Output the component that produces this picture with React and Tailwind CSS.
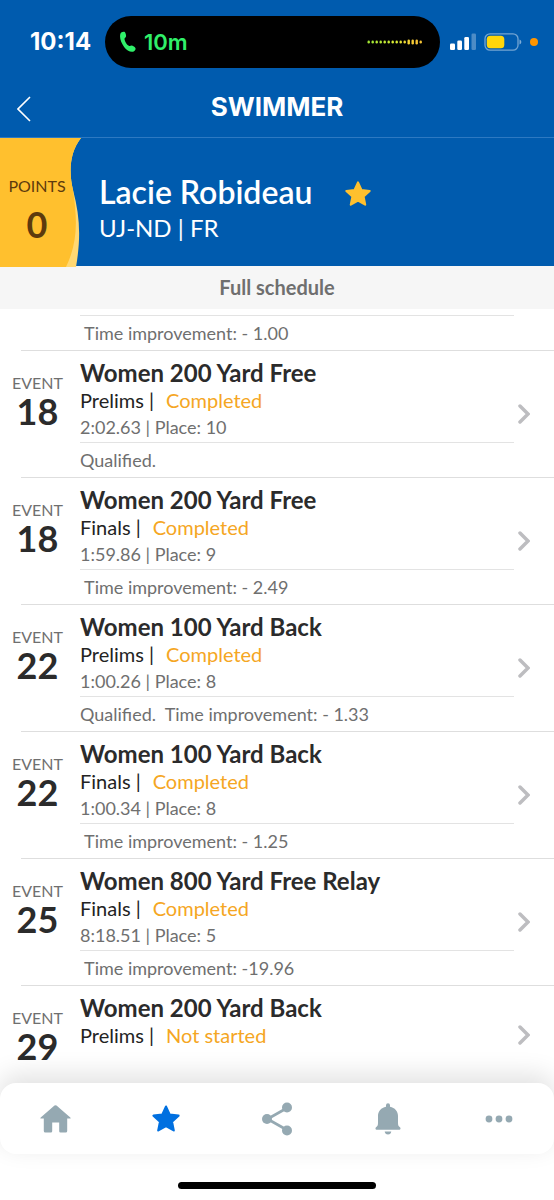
const events = [
  { number: 18, title: 'Women 200 Yard Free', round: 'Prelims', status: 'Completed', result: '2:02.63 | Place: 10', note: 'Qualified.' },
  { number: 18, title: 'Women 200 Yard Free', round: 'Finals', status: 'Completed', result: '1:59.86 | Place: 9', note: ' Time improvement: - 2.49' },
  { number: 22, title: 'Women 100 Yard Back', round: 'Prelims', status: 'Completed', result: '1:00.26 | Place: 8', note: 'Qualified.  Time improvement: - 1.33' },
  { number: 22, title: 'Women 100 Yard Back', round: 'Finals', status: 'Completed', result: '1:00.34 | Place: 8', note: ' Time improvement: - 1.25' },
  { number: 25, title: 'Women 800 Yard Free Relay', round: 'Finals', status: 'Completed', result: '8:18.51 | Place: 5', note: ' Time improvement: -19.96' },
  { number: 29, title: 'Women 200 Yard Back', round: 'Prelims', status: 'Not started' },
]

const wave = [
  '#a3e635', '#a3e635', '#b4e835', '#b4e835', '#c6ea35', '#c6ea35', '#d9ec35',
  '#d9ec35', '#e8e435', '#f0dc35', '#f5d435', '#f7cc35', '#f7c435', '#f7c435',
]

function Star({ className }) {
  return (
    <svg viewBox="0 0 24 24" fill="currentColor" stroke="currentColor" strokeWidth="1.8" strokeLinejoin="round" className={className}>
      <path d="M12 2.1l2.94 6.45 7.06.81-5.24 4.79 1.41 6.95L12 17.6l-6.17 3.5 1.41-6.95L2 9.36l7.06-.81z" />
    </svg>
  )
}

function StatusBar() {
  return (
    <div className="flex items-center pt-4 pr-4 pl-[30px] text-white">
      <span className="w-[75px] text-2xl leading-[52px] font-bold">10:14</span>
      <div className="flex h-[52px] flex-1 items-center justify-between rounded-full bg-black pl-[15px] pr-[17px]">
        <div className="flex items-center gap-2 text-[#30f06a]">
          <svg viewBox="0 0 16 22" fill="currentColor" className="h-[22px] w-4">
            <path d="M1.2 1.6C2.3.7 4 .3 4.8 1.1c.8.9 1.5 3.3 1.2 4.4-.3 1.2-1.6 1.5-1.5 2.7.3 2.3 2.2 5.4 4.3 6.6 1.2.7 2-.4 3.2-.2 1.2.3 3 1.6 3.5 2.7.4 1.2-.9 2.9-2.4 3.4-2.6.8-6.600-1.300-9-4.800C1.500 12.100-.3 8.100.1 4.500c.1-1.200.4-2.300 1.100-2.900z" />
          </svg>
          <span className="text-[22px] font-semibold">10m</span>
        </div>
        <svg viewBox="0 0 56 6" className="h-[6px] w-14">
          {wave.map((color, i) => (
            <rect key={i} x={i * 4 + 0.5} y={i > 9 && i < 13 ? 0.5 : 1.5} width="2.4" height={i > 9 && i < 13 ? 5 : 3} rx="1.2" fill={color} />
          ))}
        </svg>
      </div>
      <svg viewBox="0 0 26 18" fill="currentColor" className="ml-[10px] h-[18px] w-[26px]">
        <rect x="0" y="10.5" width="5" height="6.5" rx="1.3" />
        <rect x="7.3" y="7.5" width="4.7" height="9.5" rx="1.3" />
        <rect x="14.3" y="4" width="4.7" height="13" rx="1.3" />
        <rect x="21.5" y="0.5" width="4.5" height="16.5" rx="1.3" opacity="0.3" />
      </svg>
      <svg viewBox="0 0 38 18" className="ml-2 h-[18px] w-[38px]">
        <rect x="1" y="0.8" width="33" height="16.4" rx="5" fill="none" stroke="#fff" strokeOpacity="0.45" strokeWidth="1.3" />
        <rect x="2.8" y="2.8" width="17.5" height="12.4" rx="3.5" fill="#ffd60a" />
        <path d="M35.5 6.5c2.4 1 2.4 4 0 5z" fill="#fff" opacity="0.5" />
      </svg>
      <span className="ml-2 size-2 rounded-full bg-[#ff9500]" />
    </div>
  )
}

function Header() {
  return (
    <header className="bg-[#005bae] font-['Inter',sans-serif]">
      <StatusBar />
      <div className="grid h-[70px] grid-cols-[1fr_auto_1fr] items-center border-b border-[#2d79c2] pt-2">
        <button type="button" aria-label="Back" className="justify-self-start pt-1 pl-[17px] text-white">
          <svg viewBox="0 0 14 26" fill="none" stroke="currentColor" strokeWidth="1.6" className="h-[26px] w-[14px]">
            <path d="M13 1 1 13l12 12" />
          </svg>
        </button>
        <h1 className="text-[26px] leading-8 font-bold text-white">SWIMMER</h1>
      </div>
    </header>
  )
}

function Profile() {
  return (
    <section className="relative flex h-[128px] bg-[#005bae]">
      <svg viewBox="0 0 82 129" className="absolute top-0 left-0 h-[129px] w-[82px]">
        <path d="M0 0H81C69 15 69 35 73 52C80 78 81 100 76 129H0z" fill="#ffd873" />
        <path d="M0 0H81C69 15 69 35 73 52C78 85 77 106 66 129H0z" fill="#ffc02e" />
      </svg>
      <div className="relative w-[74px] pt-9 text-center text-[#5d3a0d]">
        <div className="text-base leading-6">POINTS</div>
        <div className="text-[36px] leading-[52px] font-bold">0</div>
      </div>
      <div className="pt-9 pl-[25px] text-white">
        <div className="flex items-center gap-8">
          <h2 className="text-[32px] leading-9 font-semibold">Lacie Robideau</h2>
          <button type="button" aria-label="Favorite" className="pt-1 text-[#ffc02e]">
            <Star className="size-7" />
          </button>
        </div>
        <div className="text-2xl leading-9">UJ-ND | FR</div>
      </div>
    </section>
  )
}

function Note({ children }) {
  return (
    <div className="border-t border-[#e3e3e3] text-lg leading-[34px] whitespace-pre text-[#6f6f6f]">
      {children}
    </div>
  )
}

function EventRow({ event }) {
  return (
    <li>
      <a href="#event" className="flex min-h-[98px]">
        <div className="w-[75px] pt-6 text-center">
          <div className="text-base leading-4 text-[#6f6f6f]">EVENT</div>
          <div className="text-[36px] leading-10 font-bold text-[#2b2b2b]">{event.number}</div>
        </div>
        <div className="flex-1 pt-2 pl-[5px]">
          <h3 className="text-2xl leading-7 font-bold text-[#2b2b2b]">{event.title}</h3>
          <div className="flex gap-3 text-xl leading-[26px] text-[#232323]">
            <span>{event.round} |</span>
            <span className="text-[#f5a623]">{event.status}</span>
          </div>
          {event.result && <div className="text-lg leading-[29px] text-[#6f6f6f]">{event.result}</div>}
          {event.note && <Note>{event.note}</Note>}
        </div>
        <svg viewBox="0 0 12 20" fill="none" stroke="#bdbdc0" strokeWidth="3.5" strokeLinecap="round" className="mr-6 ml-1 h-5 w-3 self-center">
          <path d="M2 2l8 8-8 8" />
        </svg>
      </a>
      <div className="ml-[21px] h-px bg-[#dedede]" />
    </li>
  )
}

function TabBar() {
  return (
    <footer className="relative bg-white">
      <nav className="grid h-[71px] grid-cols-5 items-center justify-items-center rounded-2xl bg-white text-[#95a9b2] shadow-[0_-8px_26px_rgba(0,0,0,0.12)]">
        <button type="button" aria-label="Home">
          <svg viewBox="0 0 31 28" fill="currentColor" className="h-7 w-[31px]">
            <path d="M14.5.6q1-.9 2 0L30.3 12.4q1 1.2-.5 1.2H27.2V26q0 1.6-1.6 1.6H20.5q-1.3 0-1.3-1.3V17.6H12.2v8.7q0 1.3-1.3 1.3H5.4Q3.8 27.6 3.8 26V13.6H1.2q-1.5 0-.5-1.2z" />
          </svg>
        </button>
        <button type="button" aria-label="Favorites" className="text-[#0070e0]">
          <Star className="size-[30px]" />
        </button>
        <button type="button" aria-label="Share">
          <svg viewBox="0 0 32 34" fill="currentColor" className="h-[34px] w-8">
            <path d="M26 6 6.5 17 26 28" fill="none" stroke="currentColor" strokeWidth="2.7" />
            <circle cx="6" cy="17" r="5" />
            <circle cx="26" cy="5.5" r="5" />
            <circle cx="26" cy="28.5" r="5" />
          </svg>
        </button>
        <button type="button" aria-label="Notifications">
          <svg viewBox="0 0 26 32" fill="currentColor" className="h-8 w-[26px]">
            <path d="M11 2.2a2 2 0 0 1 4 0v1.5c4.800.9 8 4.600 8 9.300v7c0 2.300.6 3.400 2 4.300.9.800.6 2.500-.6 2.500H1.600C.4 26.800.1 25.100 1 24.300c1.400-.9 2-2 2-4.300v-7c0-4.700 3.200-8.400 8-9.300z" />
            <path d="M9.7 28.6h6.6q-.4 3-3.3 3t-3.3-3z" />
          </svg>
        </button>
        <button type="button" aria-label="More">
          <svg viewBox="0 0 28 8" fill="currentColor" className="h-2 w-7">
            <circle cx="4" cy="4" r="3.4" />
            <circle cx="14" cy="4" r="3.4" />
            <circle cx="24" cy="4" r="3.4" />
          </svg>
        </button>
      </nav>
      <div className="flex h-[46px] items-end justify-center pb-[11px]">
        <div className="h-[7px] w-[198px] rounded-full bg-black" />
      </div>
    </footer>
  )
}

export default function App() {
  return (
    <div className="flex h-screen flex-col overflow-hidden bg-white font-['Lato',sans-serif]">
      <Header />
      <Profile />
      <div className="bg-[#f6f6f6] text-center text-xl leading-[43px] font-bold text-[#6f6f6f]">
        Full schedule
      </div>
      <main className="min-h-0 flex-1 overflow-hidden">
        <div className="pt-[6px] pr-10 pl-20">
          <Note>{' Time improvement: - 1.00'}</Note>
        </div>
        <div className="ml-[21px] h-px bg-[#dedede]" />
        <ul>
          {events.map((event, i) => (
            <EventRow key={i} event={event} />
          ))}
        </ul>
      </main>
      <TabBar />
    </div>
  )
}
